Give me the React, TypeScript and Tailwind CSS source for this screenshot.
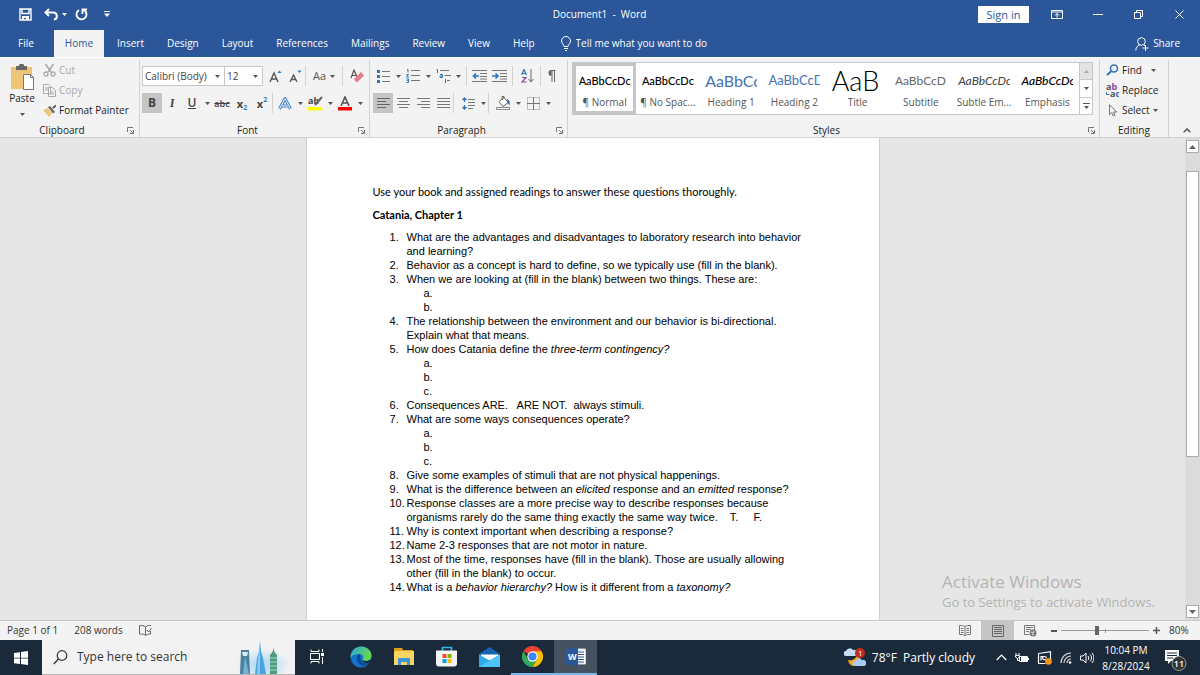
import type { ReactNode } from "react";

const Icon = ({ w, h, children }: { w: number; h: number; children: ReactNode }) => (
  <svg width={w} height={h} viewBox={`0 0 ${w} ${h}`} fill="none" className="shrink-0" aria-hidden="true">
    {children}
  </svg>
);

const Caret = () => (
  <Icon w={5} h={3}>
    <path d="M0 0h5L2.500 3z" fill="#555" />
  </Icon>
);

const CaretButton = ({ label }: { label: string }) => (
  <button aria-label={label} className="flex h-5 w-[10px] shrink-0 items-center justify-center">
    <Caret />
  </button>
);

const Tool = ({ label, active, children }: { label: string; active?: boolean; children: ReactNode }) => (
  <button
    aria-label={label}
    className={`flex h-5 w-5 shrink-0 items-center justify-center ${active ? "bg-[#c5c5c5]" : ""}`}
  >
    {children}
  </button>
);

const Separator = () => <div className="h-5 w-px shrink-0 bg-[#d2d2d2]" />;

const Launcher = ({ label }: { label: string }) => (
  <button aria-label={label} className="flex h-3 w-3 items-center justify-center">
    <Icon w={7} h={7}>
      <path d="M.5 5V.5H6M3 3l3 3M6.500 3v3.500H3" stroke="#777" />
    </Icon>
  </button>
);

const Group = ({
  title,
  launcher,
  className,
  children,
}: {
  title: string;
  launcher?: boolean;
  className: string;
  children: ReactNode;
}) => (
  <section className={`flex flex-col border-r border-[#d2d2d2] pb-px ${className}`}>
    <div className="flex-1">{children}</div>
    <div className="flex h-3 items-center text-[10px] font-medium text-[#222]">
      <span className="flex-1 text-center">{title}</span>
      {launcher && <Launcher label={`${title} settings`} />}
    </div>
  </section>
);

/* ---------- Title bar ---------- */

const TitleBar = () => (
  <div className="flex h-[30px] items-center pb-[2px] text-[10px] font-medium">
    <div className="flex flex-1 items-center pl-[19px]">
      <button aria-label="Save">
        <Icon w={13} h={13}>
          <path d="M1 1h11v11H1zM3 1v4.500h7V1" stroke="#fff" strokeWidth="1.400" />
          <path d="M3 8h7v4H7V10H5v2H3z" fill="#fff" />
        </Icon>
      </button>
      <button aria-label="Undo" className="ml-3">
        <Icon w={14} h={13}>
          <path d="M5 1L1.500 4.500 5 8M2 4.500h7c5 0 5 6.500 1 7" stroke="#fff" strokeWidth="2" />
        </Icon>
      </button>
      <button aria-label="Undo history" className="ml-1">
        <Icon w={5} h={3}>
          <path d="M0 0h5L2.500 3z" fill="#fff" />
        </Icon>
      </button>
      <button aria-label="Repeat" className="ml-2">
        <Icon w={13} h={13}>
          <path d="M4 2a5 5 0 1 0 5 0M7.500 6V1.500H12" stroke="#fff" strokeWidth="1.900" />
        </Icon>
      </button>
      <button aria-label="Customize Quick Access Toolbar" className="ml-4">
        <Icon w={6} h={6}>
          <path d="M0 0h6v1H0zM0 2.500h6L3 6z" fill="#fff" />
        </Icon>
      </button>
    </div>
    <h1 className="pr-1 whitespace-pre">Document1  -  Word</h1>
    <div className="flex flex-1 items-center justify-end pr-4">
      <button className="h-[17px] w-[51px] bg-white text-[11px] leading-[17px] text-[#2b579a]">Sign in</button>
      <button aria-label="Ribbon Display Options" className="ml-[22px]">
        <Icon w={12} h={9}>
          <path d="M.5.5h11v8H.5zM.5 2h11M6 7.500V3.500M4 5.500l2-2 2 2" stroke="#fff" />
        </Icon>
      </button>
      <button aria-label="Minimize" className="ml-[30px]">
        <Icon w={10} h={9}>
          <path d="M0 4.500h10" stroke="#fff" />
        </Icon>
      </button>
      <button aria-label="Restore" className="ml-[31px]">
        <Icon w={9} h={9}>
          <path d="M.5 2.500h6v6h-6zM2.500 2.500v-2h6v6h-2" stroke="#fff" />
        </Icon>
      </button>
      <button aria-label="Close" className="ml-8">
        <Icon w={9} h={9}>
          <path d="M.5.5l8 8M8.500.5l-8 8" stroke="#fff" />
        </Icon>
      </button>
    </div>
  </div>
);

const tabs = ["Insert", "Design", "Layout", "References", "Mailings", "Review", "View", "Help"];

const TabBar = () => (
  <nav className="flex h-[27px] items-stretch text-[10px] font-medium">
    <button className="w-[54px] pr-[2px]">File</button>
    <button className="mr-px w-[50px] bg-[#f3f3f3] text-[#2b579a]">Home</button>
    {tabs.map((tab) => (
      <button key={tab} className="pr-[11px] pl-3">
        {tab}
      </button>
    ))}
    <label className="ml-[14px] flex flex-1 items-center gap-1">
      <Icon w={12} h={15}>
        <path
          d="M4 10.500C4 8.500 1.500 7.500 1.500 5a4.500 4.500 0 0 1 9 0c0 2.500-2.500 3.500-2.500 5.500zM4 12.500h4M5 14.500h2"
          stroke="#fff"
        />
      </Icon>
      <input
        className="w-48 bg-transparent outline-none placeholder:text-white"
        placeholder="Tell me what you want to do"
        aria-label="Tell me what you want to do"
      />
    </label>
    <button className="flex items-center gap-1 pr-5">
      <Icon w={14} h={14}>
        <circle cx="6.500" cy="4.500" r="3.800" stroke="#fff" />
        <path d="M.8 13.500c.2-3 1.700-5 4-5.500M9 8l1 1M10.500 8v6M7.500 11h6" stroke="#fff" />
      </Icon>
      Share
    </button>
  </nav>
);

/* ---------- Ribbon ---------- */

const ClipboardGroup = () => (
  <Group title="Clipboard" launcher className="w-[140px] pr-[3px]">
    <div className="flex pl-[9px]">
      <button className="flex w-[26px] flex-col items-center pt-1 text-[10px] font-medium">
        <Icon w={26} h={27}>
          <path d="M2 3h21v22H2z" fill="#eec476" />
          <path d="M7 2h3a2.500 2.500 0 0 1 5 0h3v4H7z" fill="#666" />
          <path d="M14.500 10.500h7l3 3v12h-10z" fill="#fff" stroke="#777" />
          <path d="M21.500 10.500v3h3" stroke="#777" />
        </Icon>
        <span className="mt-px leading-[13px]">Paste</span>
        <span className="mt-2">
          <Caret />
        </span>
      </button>
      <div className="flex flex-col items-start pl-2 text-[10px] font-medium">
        <button className="flex h-5 items-center gap-[3px] text-[#a9a9a9]">
          <Icon w={13} h={14}>
            <path d="M2.500 1l5.500 8M10.500 1L5 9" stroke="#aaa" strokeWidth="1.600" />
            <circle cx="3" cy="11" r="2" stroke="#aaa" strokeWidth="1.300" />
            <circle cx="10" cy="11" r="2" stroke="#aaa" strokeWidth="1.300" />
          </Icon>
          Cut
        </button>
        <button className="flex h-5 items-center gap-[3px] text-[#a9a9a9]">
          <Icon w={13} h={13}>
            <path d="M.5.5h5l2 2v7h-7zM2 4h4M2 6h3M5.500 3.500h4l3 3v6h-7z" fill="#f3f3f3" stroke="#aaa" />
            <path d="M7 8h4M7 10h4" stroke="#aaa" />
          </Icon>
          Copy
        </button>
        <button className="flex h-5 items-center gap-[3px] text-[#222]">
          <Icon w={13} h={13}>
            <path d="M0 6l5-2 4 5-3 4z" fill="#eec476" />
            <path d="M5 3l2-1 5 6-2 1.500zM9 3l4-2.500L14 2l-3.500 3z" fill="#666" />
          </Icon>
          <span className="whitespace-nowrap">Format Painter</span>
        </button>
      </div>
    </div>
  </Group>
);

const Combo = ({ label, value, width }: { label: string; value: string; width: string }) => (
  <div className={`relative h-5 border border-[#c6c6c6] bg-white ${width}`}>
    <select
      aria-label={label}
      defaultValue={value}
      className="block h-full w-full appearance-none bg-transparent pl-[2px] text-[10px] text-[#444] outline-none"
    >
      <option>{value}</option>
    </select>
    <span className="pointer-events-none absolute inset-y-0 right-1 flex items-center">
      <Caret />
    </span>
  </div>
);

const FontGroup = () => (
  <Group title="Font" launcher className="w-[230px] pr-[2px]">
    <div className="flex items-center pt-[6px] pl-[2px]">
      <Combo label="Font" value="Calibri (Body)" width="w-[83px]" />
      <Combo label="Font size" value="12" width="w-[38px] border-l-0" />
      <div className="flex items-center pl-[2px]">
        <Tool label="Grow font">
          <Icon w={13} h={13}>
            <path d="M1 12L5 3l4 9M2.500 9h5" stroke="#555" strokeWidth="1.400" />
            <path d="M8.500 3L10.500.5l2 2.500z" fill="#2e75b6" />
          </Icon>
        </Tool>
        <Tool label="Shrink font">
          <Icon w={13} h={13}>
            <path d="M1 12l3.500-7L8 12M2.500 9.500h4" stroke="#555" strokeWidth="1.300" />
            <path d="M8.500.5h4L10.500 3z" fill="#2e75b6" />
          </Icon>
        </Tool>
        <Separator />
        <button className="flex h-5 w-9 items-center justify-center gap-1 text-[11px] text-[#555]">
          Aa <Caret />
        </button>
        <Separator />
        <div className="ml-1">
          <Tool label="Clear formatting">
            <Icon w={14} h={14}>
              <path d="M1 9l3-8 3 7M2 6.500h4" stroke="#555" strokeWidth="1.200" />
              <path d="M4 10l7-7 3 3.500L7.500 13H6z" fill="#e87b8b" />
            </Icon>
          </Tool>
        </div>
      </div>
    </div>
    <div className="flex items-center pt-[7px] pl-[2px] text-[12px] leading-none text-[#444]">
      <Tool label="Bold" active>
        <b>B</b>
      </Tool>
      <Tool label="Italic">
        <i className="font-serif font-bold">I</i>
      </Tool>
      <Tool label="Underline">
        <span className="border-b border-[#444] leading-[11px] font-semibold">U</span>
      </Tool>
      <CaretButton label="Underline style" />
      <Tool label="Strikethrough">
        <s className="text-[9px] font-semibold">abc</s>
      </Tool>
      <Tool label="Subscript">
        <b className="text-[11px]">x</b>
        <span className="pt-2 text-[7px] font-bold text-[#2e75b6]">2</span>
      </Tool>
      <Tool label="Superscript">
        <b className="text-[11px]">x</b>
        <span className="pb-2 text-[7px] font-bold text-[#2e75b6]">2</span>
      </Tool>
      <Separator />
      <div className="ml-[2px]">
        <Tool label="Text effects">
          <Icon w={14} h={13}>
            <path d="M1.500 12L7 1.500l5.500 10.500M4 9h6" stroke="#4a86c5" strokeWidth="3" />
            <path d="M1.500 12L7 1.500l5.500 10.500M4 9h6" stroke="#eef5fc" />
          </Icon>
        </Tool>
      </div>
      <CaretButton label="Text effects options" />
      <Tool label="Highlight">
        <Icon w={15} h={15}>
          <text x="0" y="8" fontSize="9" fontWeight="700" fill="#444">ab</text>
          <path d="M14 1L7 9" stroke="#666" strokeWidth="2" />
          <path d="M0 11h14v3.500H0z" fill="#ff0" />
        </Icon>
      </Tool>
      <CaretButton label="Highlight color" />
      <Tool label="Font color">
        <Icon w={14} h={15}>
          <path d="M3 10l4-9 4 9M4.500 7h5" stroke="#555" strokeWidth="1.600" />
          <path d="M0 11h14v3.500H0z" fill="#f00" />
        </Icon>
      </Tool>
      <CaretButton label="Font color options" />
    </div>
  </Group>
);

const ParagraphGroup = () => (
  <Group title="Paragraph" launcher className="w-[198px] pr-[2px]">
    <div className="flex items-center pt-[6px] pl-[3px]">
      <Tool label="Bullets">
        <Icon w={13} h={13}>
          <path d="M0 0h3v3H0zM0 5h3v3H0zM0 10h3v3H0z" fill="#2e75b6" />
          <path d="M5 1.500h8M5 6.500h8M5 11.500h8" stroke="#777" />
        </Icon>
      </Tool>
      <CaretButton label="Bullet library" />
      <Tool label="Numbering">
        <Icon w={14} h={14}>
          <path d="M1 .5h1v3M.5 5.500h2L.5 8h2.500M.5 10h2v3.500h-2M1 11.500h1.500" stroke="#2e75b6" />
          <path d="M5 1.500h9M5 6.500h9M5 11.500h9" stroke="#777" />
        </Icon>
      </Tool>
      <CaretButton label="Numbering library" />
      <Tool label="Multilevel list">
        <Icon w={15} h={14}>
          <path d="M.5.5h1V4M4 5.500h2.500V8.500H4V7h2M9.500 10v4" stroke="#2e75b6" />
          <path d="M4 1.500h9M8.500 6.500H15M11 11.500h3" stroke="#777" />
        </Icon>
      </Tool>
      <CaretButton label="List library" />
      <div className="mr-[2px] ml-[3px]">
        <Separator />
      </div>
      <Tool label="Decrease indent">
        <Icon w={15} h={12}>
          <path d="M0 .5h15M8 3.500h7M8 6.500h7M0 11.500h15M8 9h7" stroke="#777" />
          <path d="M7 6H2M4 3.500L1.500 6 4 8.500" stroke="#2e75b6" strokeWidth="1.600" />
        </Icon>
      </Tool>
      <Tool label="Increase indent">
        <Icon w={15} h={12}>
          <path d="M0 .5h15M8 3.500h7M8 6.500h7M0 11.500h15M8 9h7" stroke="#777" />
          <path d="M0 6h5M3.500 3.500L6 6 3.500 8.500" stroke="#2e75b6" strokeWidth="1.600" />
        </Icon>
      </Tool>
      <div className="mr-1 ml-[3px]">
        <Separator />
      </div>
      <Tool label="Sort">
        <Icon w={13} h={14}>
          <path d="M.5 6L3 .5 5.500 6M1.500 4.500h3" stroke="#2e75b6" strokeWidth="1.200" />
          <path d="M1 8.500h4L1 13h4.500" stroke="#8e44ad" strokeWidth="1.200" />
          <path d="M10 0v12M7.500 10l2.500 3 2.500-3" stroke="#666" />
        </Icon>
      </Tool>
      <div className="ml-[3px]">
        <Separator />
      </div>
      <Tool label="Show paragraph marks">
        <Icon w={9} h={12}>
          <path d="M8.500.5H4M5 .5V12M7.500.5V12" stroke="#666" />
          <path d="M4.500 0v6a3 3 0 0 1 0-6z" fill="#666" />
        </Icon>
      </Tool>
    </div>
    <div className="flex items-center pt-[7px] pl-[3px]">
      <Tool label="Align left" active>
        <Icon w={13} h={10}>
          <path d="M0 .5h13M0 3.500h9M0 6.500h13M0 9.500h9" stroke="#666" />
        </Icon>
      </Tool>
      <Tool label="Center">
        <Icon w={13} h={10}>
          <path d="M0 .5h13M2 3.500h9M0 6.500h13M2 9.500h9" stroke="#777" />
        </Icon>
      </Tool>
      <Tool label="Align right">
        <Icon w={13} h={10}>
          <path d="M0 .5h13M4 3.500h9M0 6.500h13M4 9.500h9" stroke="#777" />
        </Icon>
      </Tool>
      <Tool label="Justify">
        <Icon w={13} h={10}>
          <path d="M0 .5h13M0 3.500h13M0 6.500h13M0 9.500h13" stroke="#777" />
        </Icon>
      </Tool>
      <Separator />
      <div className="ml-1">
        <Tool label="Line spacing">
          <Icon w={13} h={13}>
            <path d="M2.500 1v4M2.500 8v4M.5 3l2-2 2 2M.5 10l2 2 2-2" stroke="#2e75b6" strokeWidth="1.300" />
            <path d="M6 2.500h7M6 5.500h7M6 8.500h7M6 11.500h5" stroke="#777" />
          </Icon>
        </Tool>
      </div>
      <CaretButton label="Line spacing options" />
      <Separator />
      <div className="ml-1">
        <Tool label="Shading">
          <Icon w={15} h={14}>
            <path d="M3 5.500l5-4 4 5-5 4zM6 4V.5h2V3" fill="#fff" stroke="#666" />
            <path d="M11 3c3 1 3 3 2.500 6.500L11.500 7z" fill="#2e75b6" />
            <path d="M.5 11.500h13v2H.5z" fill="#fff" stroke="#888" />
          </Icon>
        </Tool>
      </div>
      <CaretButton label="Shading color" />
      <Tool label="Borders">
        <Icon w={13} h={13}>
          <path d="M.5.5h12v12H.5z" stroke="#888" strokeDasharray="1 1" />
          <path d="M6.500 0v13M0 6.500h13" stroke="#777" />
        </Icon>
      </Tool>
      <CaretButton label="Border options" />
    </div>
  </Group>
);

const styles = [
  { name: "¶ Normal", sample: "AaBbCcDc", look: "text-[11px] font-medium text-black" },
  { name: "¶ No Spac...", sample: "AaBbCcDc", look: "text-[11px] font-medium text-black" },
  { name: "Heading 1", sample: "AaBbCc", look: "text-[16px] text-[#4472b4]" },
  { name: "Heading 2", sample: "AaBbCcD", look: "text-[13px] text-[#4472b4]" },
  { name: "Title", sample: "AaB", look: "text-[27px] font-light text-black" },
  { name: "Subtitle", sample: "AaBbCcD", look: "text-[12px] text-[#666]" },
  { name: "Subtle Em...", sample: "AaBbCcDc", look: "text-[12px] italic text-[#404040]" },
  { name: "Emphasis", sample: "AaBbCcDc", look: "text-[12px] font-medium italic text-black" },
];

const StylesGroup = () => (
  <Group title="Styles" launcher className="min-w-0 flex-1 pr-[2px]">
    <div className="mx-1 mt-[2px] flex h-[53px] border border-[#c6c6c6] bg-white">
      <div className="grid flex-1 grid-cols-8">
        {styles.map((s, i) => (
          <button
            key={s.name}
            className={`flex min-w-0 flex-col items-center border-3 ${i === 0 ? "border-[#c5c5c5]" : "border-transparent"}`}
          >
            <span className="flex h-[29px] w-[52px] items-center overflow-hidden">
              <span className={`font-[Lato,sans-serif] leading-none whitespace-nowrap ${s.look}`}>{s.sample}</span>
            </span>
            <span className="text-[10px] leading-[14px] whitespace-nowrap text-[#555]">{s.name}</span>
          </button>
        ))}
      </div>
      <div className="flex w-[13px] flex-col divide-y divide-[#c6c6c6] border-l border-[#c6c6c6]">
        <button aria-label="Scroll styles up" className="flex flex-1 items-center justify-center bg-[#e3e3e3]">
          <Icon w={5} h={3}>
            <path d="M0 3h5L2.500 0z" fill="#aaa" />
          </Icon>
        </button>
        <button aria-label="Scroll styles down" className="flex flex-1 items-center justify-center">
          <Caret />
        </button>
        <button aria-label="More styles" className="flex flex-1 items-center justify-center">
          <Icon w={7} h={6}>
            <path d="M0 0h7v1H0zM1 3h5L3.500 6z" fill="#555" />
          </Icon>
        </button>
      </div>
    </div>
  </Group>
);

const EditingGroup = () => (
  <Group title="Editing" className="w-[69px]">
    <div className="flex flex-col items-start pl-[6px] text-[10px] font-medium text-[#222]">
      <button className="flex h-5 items-center gap-[3px]">
        <Icon w={13} h={12}>
          <circle cx="8" cy="4.500" r="3.500" stroke="#2e75b6" strokeWidth="1.600" />
          <path d="M5.500 7L1 11" stroke="#2e75b6" strokeWidth="2" />
        </Icon>
        Find
        <span className="ml-[6px]">
          <Caret />
        </span>
      </button>
      <button className="flex h-5 items-center gap-[3px]">
        <Icon w={13} h={15}>
          <text x="0" y="7" fontSize="9" fontWeight="700" fill="#555">a<tspan fill="#8e44ad">b</tspan></text>
          <text x="4" y="14" fontSize="9" fontWeight="700" fill="#555">a<tspan fill="#2e75b6">c</tspan></text>
          <path d="M.5 9v2.500h3" stroke="#2e75b6" />
        </Icon>
        Replace
      </button>
      <button className="flex h-5 items-center gap-[3px]">
        <Icon w={13} h={13}>
          <path d="M3.500.7v10l2.300-2.200L7.300 12l1.700-.8-1.500-3.200h3.200z" stroke="#777" />
        </Icon>
        Select
        <Caret />
      </button>
    </div>
  </Group>
);

const Ribbon = () => (
  <div className="flex h-[81px] items-stretch border-t border-b border-t-white border-b-[#d2d2d2] bg-[#f3f3f3] pt-[2px] text-[#222]">
    <ClipboardGroup />
    <FontGroup />
    <ParagraphGroup />
    <StylesGroup />
    <EditingGroup />
    <div className="flex w-[31px] items-end justify-center pb-1 pl-1">
      <button aria-label="Collapse the ribbon">
        <Icon w={8} h={5}>
          <path d="M.7 4.300L4 1l3.300 3.300" stroke="#555" strokeWidth="1.500" />
        </Icon>
      </button>
    </div>
  </div>
);

/* ---------- Document ---------- */

type Question = { text: ReactNode; parts?: string[] };

const questions: Question[] = [
  { text: "What are the advantages and disadvantages to laboratory research into behavior and learning?" },
  { text: "Behavior as a concept is hard to define, so we typically use (fill in the blank)." },
  { text: "When we are looking at (fill in the blank) between two things. These are:", parts: ["a.", "b."] },
  { text: "The relationship between the environment and our behavior is bi-directional. Explain what that means." },
  {
    text: (
      <>
        How does Catania define the <em>three-term contingency?</em>
      </>
    ),
    parts: ["a.", "b.", "c."],
  },
  { text: "Consequences ARE.   ARE NOT.  always stimuli." },
  { text: "What are some ways consequences operate?", parts: ["a.", "b.", "c."] },
  { text: "Give some examples of stimuli that are not physical happenings." },
  {
    text: (
      <>
        What is the difference between an <em>elicited</em> response and an <em>emitted</em> response?
      </>
    ),
  },
  {
    text: "Response classes are a more precise way to describe responses because organisms rarely do the same thing exactly the same way twice.    T.     F.",
  },
  { text: "Why is context important when describing a response?" },
  { text: "Name 2-3 responses that are not motor in nature." },
  {
    text: "Most of the time, responses have (fill in the blank). Those are usually allowing other (fill in the blank) to occur.",
  },
  {
    text: (
      <>
        What is a <em>behavior hierarchy?</em> How is it different from a <em>taxonomy?</em>
      </>
    ),
  },
];

const Page = () => (
  <article className="w-[574px] border-x border-[#d0d0d0] bg-white pt-[47px] pr-[70px] pl-[66px] text-black">
    <p className="font-[Lato,sans-serif] text-[11px] leading-[14px] whitespace-nowrap [font-variant-ligatures:none]">
      Use your book and assigned readings to answer these questions thoroughly.
    </p>
    <h2 className="mt-[9px] font-[Lato,sans-serif] text-[11px] leading-[14px] font-bold">Catania, Chapter 1</h2>
    <ol className="mt-2 pl-[17px] font-[Liberation_Sans,Arial,sans-serif] text-[11px] leading-[14px]">
      {questions.map((q, i) => (
        <li key={i} className="flex">
          <span className="w-[17px] shrink-0">{i + 1}.</span>
          <div>
            <p className="whitespace-pre-wrap">{q.text}</p>
            {q.parts && (
              <ol className="pl-[17px]">
                {q.parts.map((part) => (
                  <li key={part}>{part}</li>
                ))}
              </ol>
            )}
          </div>
        </li>
      ))}
    </ol>
  </article>
);

const ScrollBar = () => (
  <div className="flex w-[15px] flex-col items-stretch bg-[#dbdbdb] py-[2px] pr-px pl-px">
    <button aria-label="Scroll up" className="flex h-[13px] items-center justify-center border border-[#ababab] bg-white">
      <Icon w={7} h={4}>
        <path d="M0 4h7L3.500 0z" fill="#666" />
      </Icon>
    </button>
    <div className="flex flex-1 flex-col pt-[18px]">
      <div className="h-[66%] border border-[#ababab] bg-white" />
    </div>
    <button aria-label="Scroll down" className="flex h-[13px] items-center justify-center border border-[#ababab] bg-white">
      <Icon w={7} h={4}>
        <path d="M0 0h7L3.500 4z" fill="#666" />
      </Icon>
    </button>
  </div>
);

const Workspace = () => (
  <main className="relative flex min-h-0 flex-1 bg-[#e6e6e6]">
    <div className="flex flex-1 justify-center overflow-hidden">
      <Page />
    </div>
    <ScrollBar />
    <div className="absolute right-[45px] bottom-2 text-[#b4b4b4]">
      <p className="text-[17px] leading-5">Activate Windows</p>
      <p className="text-[13px] leading-5">Go to Settings to activate Windows.</p>
    </div>
  </main>
);

/* ---------- Status bar ---------- */

const StatusBar = () => (
  <div className="flex h-5 items-center border-t border-[#c8c8c8] bg-[#f3f3f3] pl-[7px] text-[10px] text-[#333]">
    <span>Page 1 of 1</span>
    <span className="ml-4">208 words</span>
    <button aria-label="Proofing" className="ml-4">
      <Icon w={13} h={11}>
        <path d="M6.500 1.500v9M6.500 2C5 .5 3 .5.5.5v8.500c3 0 4.500 0 6 1.500M6.500 2C8 .5 10 .5 12 .5M6.500 10.500c1-1 3-1.500 5-1.500V6M8 5l1.500 2L12.500 3" stroke="#666" />
      </Icon>
    </button>
    <div className="flex-1" />
    <button aria-label="Read mode" className="flex h-full w-[33px] items-center justify-center">
      <Icon w={12} h={11}>
        <path d="M6 1.500v9M6 1.500C4.500.5 2.500.5.5.5v9c2 0 4 0 5.500 1 1.500-1 3.500-1 5.500-1v-9c-2 0-4 0-5.500 1M2 3.500h2.500M2 5.500h2.500M2 7.500h2.500M7.500 3.500H10M7.500 5.500H10M7.500 7.500H10" stroke="#777" />
      </Icon>
    </button>
    <button aria-label="Print layout" className="flex h-full w-[33px] items-center justify-center bg-[#c5c5c5]">
      <Icon w={12} h={12}>
        <path d="M.5.5h11v11H.5zM2 2.500h8M2 4.500h8M2 6.500h8M2 8.500h8" stroke="#666" />
      </Icon>
    </button>
    <button aria-label="Web layout" className="flex h-full w-[33px] items-center justify-center">
      <Icon w={13} h={12}>
        <path d="M5 9.500H.5v-9h10V5M2 2.500h7M2 4.500h5M2 6.500h3" stroke="#777" />
        <circle cx="9" cy="8" r="3.500" fill="#777" />
        <path d="M7 7l2 1 1-2M8 10l2-1" stroke="#eee" />
      </Icon>
    </button>
    <button aria-label="Zoom out" className="ml-1">
      <Icon w={6} h={6}>
        <path d="M0 3h6" stroke="#555" strokeWidth="2" />
      </Icon>
    </button>
    <div className="relative mx-1 flex items-center">
      <span className="absolute left-1/2 h-1 w-px bg-[#999]" />
      <input
        type="range"
        aria-label="Zoom"
        min={0}
        max={100}
        defaultValue={40}
        className="relative h-3 w-[88px] appearance-none bg-transparent [&::-webkit-slider-runnable-track]:h-px [&::-webkit-slider-runnable-track]:bg-[#999] [&::-webkit-slider-thumb]:-mt-1 [&::-webkit-slider-thumb]:h-[9px] [&::-webkit-slider-thumb]:w-1 [&::-webkit-slider-thumb]:appearance-none [&::-webkit-slider-thumb]:bg-[#666]"
      />
    </div>
    <button aria-label="Zoom in">
      <Icon w={7} h={7}>
        <path d="M0 3.500h7M3.500 0v7" stroke="#555" strokeWidth="1.500" />
      </Icon>
    </button>
    <span className="w-10 pl-[9px]">80%</span>
  </div>
);

/* ---------- Taskbar ---------- */

const Skyline = () => (
  <Icon w={60} h={33}>
    <defs>
      <radialGradient id="skyGlow">
        <stop offset="0.3" stopColor="#b9def5" />
        <stop offset="1" stopColor="#f2f2f2" />
      </radialGradient>
    </defs>
    <ellipse cx="28" cy="24" rx="27" ry="16" fill="url(#skyGlow)" />
    <path d="M6 9h8l1 24H5z" fill="#4d7fa0" />
    <path d="M7 11h6l-1 4H8z" fill="#d8ecf6" />
    <path d="M10 15l4 18H8z" fill="#79b0cd" />
    <path d="M25 0l1 10 2 7 3 16H20l2-16 2-7z" fill="#4aa3dd" />
    <path d="M25 5v28h-3l1-16z" fill="#8ccbf0" />
    <path d="M38.500 7l1 4 2.500 3v19h-7V14l2.500-3z" fill="#4d9b83" />
    <path d="M35 17h7M35 21h7M35 25h7M35 29h7" stroke="#a5d5c2" />
  </Icon>
);

const TaskButton = ({ label, state, children }: { label: string; state?: "open" | "active"; children: ReactNode }) => (
  <button
    aria-label={label}
    className={`flex h-full w-[43px] items-center justify-center border-b-2 ${
      state === "active"
        ? "border-[#76b9ed] bg-[#46525f]"
        : state === "open"
          ? "border-[#76b9ed]"
          : "border-transparent"
    }`}
  >
    {children}
  </button>
);

const Taskbar = () => (
  <footer className="flex h-[35px] items-center bg-[#1b2a3a] text-white">
    <button aria-label="Start" className="flex h-full w-[42px] items-center justify-center">
      <Icon w={14} h={14}>
        <path d="M0 2l6-.8v5.500H0zM7 1l7-1v6.700H7zM0 7.600h6V13l-6-.8zM7 7.600h7V14l-7-1z" fill="#fff" />
      </Icon>
    </button>
    <label className="mr-px flex h-full w-[253px] items-center border-b border-[#b5b5b5] bg-[#f2f2f2] pl-[11px]">
      <Icon w={15} h={15}>
        <circle cx="9" cy="5.500" r="4.800" stroke="#333" strokeWidth="1.200" />
        <path d="M5.500 9L.7 14" stroke="#333" strokeWidth="1.300" />
      </Icon>
      <input
        aria-label="Search"
        placeholder="Type here to search"
        className="ml-[9px] min-w-0 flex-1 bg-transparent text-[12px] outline-none placeholder:text-[#333]"
      />
      <Skyline />
    </label>
    <TaskButton label="Task view">
      <Icon w={15} h={15}>
        <path d="M1 .5v2h8v-2M1 14.500v-2h8v2M.5 4.500h9v6h-9zM12.500 0v3M12.500 8v7" stroke="#fff" />
        <path d="M11 4h3v3h-3z" fill="#fff" />
      </Icon>
    </TaskButton>
    <TaskButton label="Microsoft Edge">
      <svg width="22" height="22" viewBox="0 0 22 22" aria-hidden="true">
        <defs>
          <linearGradient id="edgeTop" x1="0" x2="1" y1="0" y2="0.400">
            <stop offset="0" stopColor="#2aa5e0" />
            <stop offset="1" stopColor="#66d84f" />
          </linearGradient>
        </defs>
        <circle cx="11" cy="11" r="10.500" fill="#1273cf" />
        <path d="M.6 10C1.500 4 6 .5 11 .5c6 0 10.500 4 10.500 9 0 4-3 5.500-6 5.500-2.500 0-3.500-1-2.500-2.500 1-2-.5-4.500-4-4.500C5 8 2 9 .6 12z" fill="url(#edgeTop)" />
        <path d="M9 8c-3 1.500-3.500 9 3 12 3 .5 6-1 8-3.500-5 2-9.500 0-9.500-4C10.500 10 11 9 9 8z" fill="#0a4a92" />
        <path d="M12 13.500c1 1.800 5 2 8.500.3l.8 1.700c-1 .8-1 1-1.500 1-4 1-7 0-7.800-3z" fill="#1b2a3a" />
      </svg>
    </TaskButton>
    <TaskButton label="File Explorer">
      <Icon w={20} h={17}>
        <path d="M0 0h8l1 2h10v4H0z" fill="#e0a11b" />
        <path d="M0 3h20v14H0z" fill="#fcd462" />
        <path d="M4 10h12v7h-3v-3H7v3H4z" fill="#3f95db" />
      </Icon>
    </TaskButton>
    <TaskButton label="Microsoft Store">
      <Icon w={21} h={21}>
        <path d="M6.500 5V1.500h9V5" stroke="#31b5ec" strokeWidth="1.600" />
        <path d="M0 4.500h21v13a3 3 0 0 1-3 3H3a3 3 0 0 1-3-3z" fill="#f4f4f4" />
        <path d="M6.500 8h4v4h-4z" fill="#f25022" />
        <path d="M11.500 8h4v4h-4z" fill="#7fba00" />
        <path d="M6.500 13h4v4h-4z" fill="#00a4ef" />
        <path d="M11.500 13h4v4h-4z" fill="#ffb900" />
      </Icon>
    </TaskButton>
    <TaskButton label="Mail">
      <Icon w={21} h={20}>
        <path d="M0 7l10.500-7L21 7v5H0z" fill="#1465b5" />
        <path d="M2 7.500h17v6H2z" fill="#fff" />
        <path d="M0 7.500l10.500 6 10.500-6V20H0z" fill="#2fa9ea" />
        <path d="M0 20l21-12.500V20z" fill="#4cc4f5" />
      </Icon>
    </TaskButton>
    <TaskButton label="Google Chrome" state="open">
      <Icon w={21} h={21}>
        <path d="M10.500 10.500L1.400 5.250A10.500 10.500 0 0 1 19.600 5.250z" fill="#ea4335" />
        <path d="M1.400 5.250A10.500 10.500 0 0 0 10.500 21l4.600-7.900-9.200 0z" fill="#34a853" />
        <path d="M19.600 5.250A10.500 10.500 0 0 1 10.500 21l4.600-7.900L10.500 5.250z" fill="#fbbc04" />
        <circle cx="10.500" cy="10.500" r="5.200" fill="#fff" />
        <circle cx="10.500" cy="10.500" r="4.100" fill="#4285f4" />
      </Icon>
    </TaskButton>
    <TaskButton label="Word" state="active">
      <Icon w={20} h={19}>
        <path d="M9 2h10.500v15H9z" fill="#fff" stroke="#cfd8e6" />
        <path d="M11 5h7M11 7.500h7M11 10h7M11 12.500h7M11 15h7" stroke="#2b579a" />
        <path d="M0 2l12-2v19L0 17z" fill="#2b579a" />
        <text x="2" y="13" fontSize="9" fontWeight="700" fill="#fff">W</text>
      </Icon>
    </TaskButton>
    <div className="flex-1" />
    <button className="flex items-center text-[12px] whitespace-pre">
      <Icon w={22} h={21}>
        <path d="M4 13c4 1 8-1 9-5 5 3 5 11-2 11-4 0-6-2-7-6z" fill="#f5a623" />
        <path d="M2 9a2.500 2.500 0 0 1 0-5 4 4 0 0 1 7-1 3 3 0 0 1 2 6z" fill="#c5dcf7" />
        <path d="M11 19a2.500 2.500 0 0 1 0-5 4 4 0 0 1 7-1 3 3 0 0 1 2 6z" fill="#a9cbf2" />
        <circle cx="16" cy="6" r="5" fill="#c42b1c" />
        <text x="14" y="9" fontSize="8" fill="#fff">1</text>
      </Icon>
      <span className="ml-[6px]">78°F  Partly cloudy</span>
    </button>
    <div className="ml-[21px] flex items-center gap-2">
      <button aria-label="Show hidden icons">
        <Icon w={11} h={7}>
          <path d="M.7 6l4.800-5 4.800 5" stroke="#fff" strokeWidth="1.200" />
        </Icon>
      </button>
      <button aria-label="Battery">
        <Icon w={14} h={11}>
          <path d="M4.500 4.500h8v5h-8zM13.500 6v2M1 1v2M4 1v2M.5 3.500h4v1.500l-2 1.500L.5 5zM2.500 6.500v2h2" stroke="#fff" />
          <path d="M6 5h6v4H6z" fill="#fff" />
        </Icon>
      </button>
      <button aria-label="Sync">
        <Icon w={15} h={14}>
          <path d="M1.500 2.500L13.500.7v9M1.500 2.500v10h7M4 9.500V5.500h4M9.500 7c0-2-4-2-4 0s3 2 4 1" stroke="#fff" strokeWidth="1.200" />
          <circle cx="11.500" cy="10.500" r="3.300" fill="#f7941d" />
        </Icon>
      </button>
      <button aria-label="Wi-Fi">
        <Icon w={12} h={12}>
          <path d="M1 11A10 10 0 0 1 11 1M4 11a7 7 0 0 1 7-7M7 11a4 4 0 0 1 4-4" stroke="#ddd" strokeWidth="1.200" />
          <circle cx="10" cy="10.500" r="1.300" fill="#fff" />
        </Icon>
      </button>
      <button aria-label="Volume">
        <Icon w={14} h={12}>
          <path d="M.5 4v4H3l3 2.800V1.200L3 4zM8 4c1 1 1 3 0 4M10 2.500c2 2 2 5 0 7M12 1c2.500 3 2.500 7 0 10" stroke="#fff" />
        </Icon>
      </button>
    </div>
    <button className="ml-[2px] flex w-[60px] flex-col items-center text-[10px] leading-4">
      <span>10:04 PM</span>
      <span>8/28/2024</span>
    </button>
    <button aria-label="11 notifications" className="mr-[13px] ml-[9px] pt-1">
      <Icon w={22} h={22}>
        <path d="M0 1h14v11H6l-3 3v-3H0z" fill="#fff" />
        <path d="M2 4h10M2 6.500h10M2 9h6" stroke="#1b2a3a" />
        <circle cx="14" cy="14.500" r="7" fill="#333" stroke="#999" />
        <text x="14" y="18" textAnchor="middle" fontSize="9" fontWeight="600" fill="#fff">11</text>
      </Icon>
    </button>
  </footer>
);

const App = () => {
  return (
    <div className="flex h-screen flex-col overflow-hidden font-['Open_Sans','Noto_Sans',sans-serif]">
      <header className="bg-[#2b579a] text-white">
        <TitleBar />
        <TabBar />
        <Ribbon />
      </header>
      <Workspace />
      <StatusBar />
      <Taskbar />
    </div>
  );
};

export default App;
